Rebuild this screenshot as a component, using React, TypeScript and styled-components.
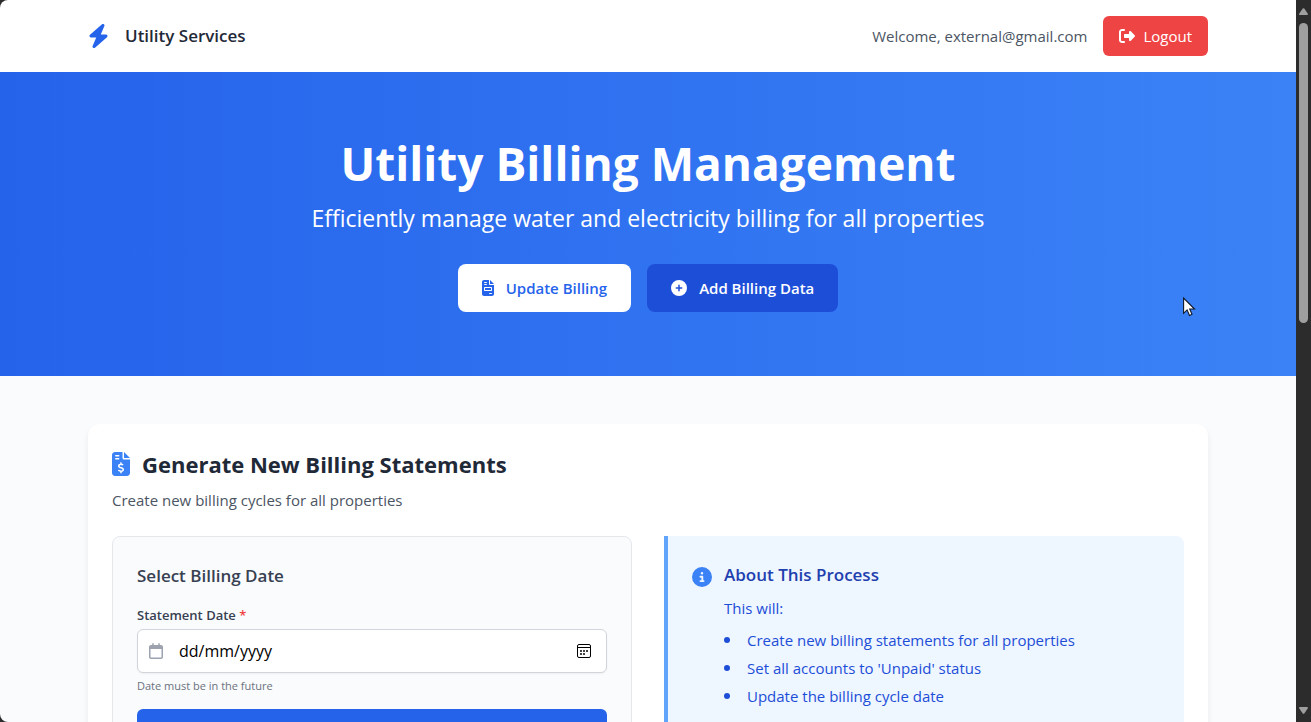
import React from "react";
import styled, { createGlobalStyle } from "styled-components";
import {
  FaBolt,
  FaCircleInfo,
  FaCirclePlus,
  FaFileInvoice,
  FaFileInvoiceDollar,
  FaRegCalendar,
  FaRightFromBracket,
} from "react-icons/fa6";

const GlobalStyle = createGlobalStyle`
  *, *::before, *::after { box-sizing: border-box; }
  body {
    margin: 0;
    background: #2c2c2c;
    color: #1f2937;
    font-family: "Open Sans", "Noto Sans", sans-serif;
    font-size: 15px;
    line-height: 24px;
  }
  h1, h2, h3, p, ul { margin: 0; padding: 0; }
  button, input { font: inherit; }
  button { cursor: pointer; }
  svg { display: block; flex: none; }
`;

const Shell = styled.div`
  display: flex;
  height: 100vh;
`;

const Page = styled.div`
  flex: 1;
  min-width: 0;
  overflow-y: auto;
  scrollbar-width: none;
  background: #fafbfd;
  border-radius: 8px 0 0 8px;
`;

const ScrollTrack = styled.div`
  display: flex;
  flex-direction: column;
  align-items: center;
  gap: 8px;
  width: 15px;
  padding: 8px 0;
  background: #2c2c2c;
`;

const ScrollThumb = styled.div`
  width: 9px;
  height: 300px;
  margin-bottom: auto;
  border-radius: 5px;
  background: #9f9f9f;
`;

const Container = styled.div`
  max-width: 1152px;
  margin: 0 auto;
  padding: 0 16px;
`;

const HeaderBar = styled.header`
  background: #ffffff;
`;

const HeaderRow = styled(Container)`
  display: flex;
  align-items: center;
  justify-content: space-between;
  padding-top: 16px;
  padding-bottom: 16px;
`;

const Brand = styled.div`
  display: flex;
  align-items: center;
  gap: 16px;
  color: #1f2937;
  font-size: 17px;
  font-weight: 600;
`;

const BrandIcon = styled(FaBolt)`
  width: 21px;
  height: 24px;
  color: #2563eb;
`;

const Account = styled.div`
  display: flex;
  align-items: center;
  gap: 16px;
  color: #4b5563;
`;

const LogoutButton = styled.button`
  display: flex;
  align-items: center;
  gap: 8px;
  height: 40px;
  padding: 0 16px;
  border: 0;
  border-radius: 6px;
  background: #ef4444;
  color: #ffffff;
`;

const Hero = styled.section`
  padding: 64px 16px;
  background: linear-gradient(90deg, #2563eb, #3b82f6);
  color: #ffffff;
  text-align: center;
`;

const HeroTitle = styled.h1`
  margin-bottom: 10px;
  font-size: 46px;
  font-weight: 700;
  line-height: 54px;
`;

const HeroText = styled.p`
  margin-bottom: 28px;
  font-size: 23px;
  line-height: 36px;
`;

const HeroActions = styled.div`
  display: flex;
  justify-content: center;
  gap: 16px;
`;

const HeroButton = styled.button<{ $solid?: boolean }>`
  display: flex;
  align-items: center;
  gap: 12px;
  height: 48px;
  padding: 0 24px;
  border: 0;
  border-radius: 8px;
  background: ${(p) => (p.$solid ? "#1d4ed8" : "#ffffff")};
  color: ${(p) => (p.$solid ? "#ffffff" : "#2563eb")};
  font-weight: 600;
`;

const InvoiceIcon = styled(FaFileInvoice)`
  width: 12px;
  height: 16px;
`;

const Content = styled(Container)`
  padding-top: 48px;
  padding-bottom: 48px;
`;

const Card = styled.section`
  padding: 24px;
  border-radius: 12px;
  background: #ffffff;
  box-shadow: 0 4px 6px rgba(0, 0, 0, 0.07);
`;

const CardTitle = styled.h2`
  display: flex;
  align-items: center;
  gap: 12px;
  margin-bottom: 8px;
  font-size: 22px;
  font-weight: 700;
  line-height: 32px;
`;

const CardIcon = styled(FaFileInvoiceDollar)`
  width: 18px;
  height: 24px;
  color: #3b82f6;
`;

const CardText = styled.p`
  margin-bottom: 24px;
  color: #4b5563;
`;

const Columns = styled.div`
  display: grid;
  grid-template-columns: 1fr 1fr;
  gap: 32px;
`;

const FormPanel = styled.form`
  padding: 24px;
  border: 1px solid #e5e7eb;
  border-radius: 8px;
  background: #fafbfd;
`;

const PanelTitle = styled.h3`
  font-size: 17px;
  font-weight: 600;
  line-height: 30px;
`;

const FormTitle = styled(PanelTitle)`
  margin-bottom: 14px;
  color: #374151;
`;

const FieldLabel = styled.label`
  display: block;
  margin-bottom: 4px;
  color: #374151;
  font-size: 13px;
  font-weight: 600;
  line-height: 20px;

  span { color: #ef4444; }
`;

const Field = styled.div`
  display: flex;
  align-items: center;
  height: 44px;
  padding: 0 13px 0 11px;
  border: 1px solid #d1d5db;
  border-radius: 6px;
  background: #ffffff;
  box-shadow: 0 1px 2px rgba(0, 0, 0, 0.05);
`;

const FieldIcon = styled(FaRegCalendar)`
  width: 14px;
  height: 16px;
  color: #9ca3af;
`;

const DateInput = styled.input`
  flex: 1;
  min-width: 0;
  padding: 0 16px;
  border: 0;
  outline: 0;
  background: transparent;
  color: #000000;
  font-size: 16px;

  &::placeholder { color: #000000; opacity: 1; }
`;

const PickerButton = styled.button`
  padding: 2px;
  border: 0;
  background: transparent;
  color: #000000;
`;

const Hint = styled.p`
  margin: 4px 0 14px;
  color: #6b7280;
  font-size: 11px;
  line-height: 18px;
`;

const SubmitButton = styled.button`
  display: block;
  width: 100%;
  height: 48px;
  border: 0;
  border-radius: 6px;
  background: #2563eb;
`;

const InfoPanel = styled.aside`
  display: flex;
  align-items: flex-start;
  gap: 12px;
  padding: 24px;
  border-left: 4px solid #60a5fa;
  border-radius: 0 8px 8px 0;
  background: #eef6ff;
  color: #1d4ed8;

  > svg { margin-top: 7px; color: #3b82f6; }
`;

const InfoTitle = styled(PanelTitle)`
  margin-bottom: 6px;
  color: #1e40af;
`;

const InfoList = styled.ul`
  display: grid;
  gap: 4px;
  margin-top: 8px;
  list-style: none;

  li {
    display: flex;
    align-items: center;
    gap: 17px;
  }

  li::before {
    content: "";
    width: 6px;
    height: 6px;
    border-radius: 50%;
    background: currentColor;
  }
`;

const Pointer = styled.svg`
  position: absolute;
  top: 297px;
  right: 115px;
  pointer-events: none;
`;

const steps = [
  "Create new billing statements for all properties",
  "Set all accounts to 'Unpaid' status",
  "Update the billing cycle date",
];

function ScrollArrow({ down }: { down?: boolean }) {
  return (
    <svg width="9" height="7" viewBox="0 0 9 7" fill="#9f9f9f" aria-hidden="true">
      <path d={down ? "M0 0.5Q0 0 1 0H8Q9 0 9 1L5.3 6.4Q4.5 7.3 3.7 6.4L0 1Z" : "M0 6.5Q0 7 1 7H8Q9 7 9 6L5.3 .6Q4.5 -.3 3.7 .6L0 6Z"} />
    </svg>
  );
}

function PickerIcon() {
  return (
    <svg width="14" height="14" viewBox="0 0 14 14" aria-hidden="true">
      <rect x="0.5" y="0.5" width="13" height="13" rx="1.5" fill="none" stroke="currentColor" />
      <path d="M1 3.5H13" stroke="currentColor" />
      <path d="M3 6h2v2H3zM6 6h2v2H6zM9 6h2v2H9zM3 9h2v2H3zM6 9h2v2H6z" fill="#444444" />
    </svg>
  );
}

export default function App() {
  return (
    <>
      <GlobalStyle />
      <Shell>
        <Page>
          <HeaderBar>
            <HeaderRow>
              <Brand>
                <BrandIcon />
                Utility Services
              </Brand>
              <Account>
                <span>Welcome, external@gmail.com</span>
                <LogoutButton type="button">
                  <FaRightFromBracket size={16} />
                  Logout
                </LogoutButton>
              </Account>
            </HeaderRow>
          </HeaderBar>

          <Hero>
            <HeroTitle>Utility Billing Management</HeroTitle>
            <HeroText>Efficiently manage water and electricity billing for all properties</HeroText>
            <HeroActions>
              <HeroButton type="button">
                <InvoiceIcon />
                Update Billing
              </HeroButton>
              <HeroButton type="button" $solid>
                <FaCirclePlus size={16} />
                Add Billing Data
              </HeroButton>
            </HeroActions>
          </Hero>

          <Content as="main">
            <Card>
              <CardTitle id="generate-title">
                <CardIcon />
                Generate New Billing Statements
              </CardTitle>
              <CardText>Create new billing cycles for all properties</CardText>
              <Columns>
                <FormPanel>
                  <FormTitle>Select Billing Date</FormTitle>
                  <FieldLabel id="date-label" htmlFor="statement-date">
                    Statement Date <span>*</span>
                  </FieldLabel>
                  <Field>
                    <FieldIcon />
                    <DateInput id="statement-date" type="text" placeholder="dd/mm/yyyy" />
                    <PickerButton type="button" aria-labelledby="date-label">
                      <PickerIcon />
                    </PickerButton>
                  </Field>
                  <Hint>Date must be in the future</Hint>
                  <SubmitButton type="submit" aria-labelledby="generate-title" />
                </FormPanel>
                <InfoPanel>
                  <FaCircleInfo size={20} />
                  <div>
                    <InfoTitle>About This Process</InfoTitle>
                    <p>This will:</p>
                    <InfoList>
                      {steps.map((step) => (
                        <li key={step}>{step}</li>
                      ))}
                    </InfoList>
                  </div>
                </InfoPanel>
              </Columns>
            </Card>
          </Content>
        </Page>
        <ScrollTrack>
          <ScrollArrow />
          <ScrollThumb />
          <ScrollArrow down />
        </ScrollTrack>
      </Shell>
      <Pointer width="13" height="20" viewBox="0 0 13 20" aria-hidden="true">
        <path d="M.6 1V16.3L4.1 12.9L6.5 18.4L9 17.3L6.7 12H11.5Z" fill="#fff" stroke="#101828" strokeWidth="1.1" />
      </Pointer>
    </>
  );
}
